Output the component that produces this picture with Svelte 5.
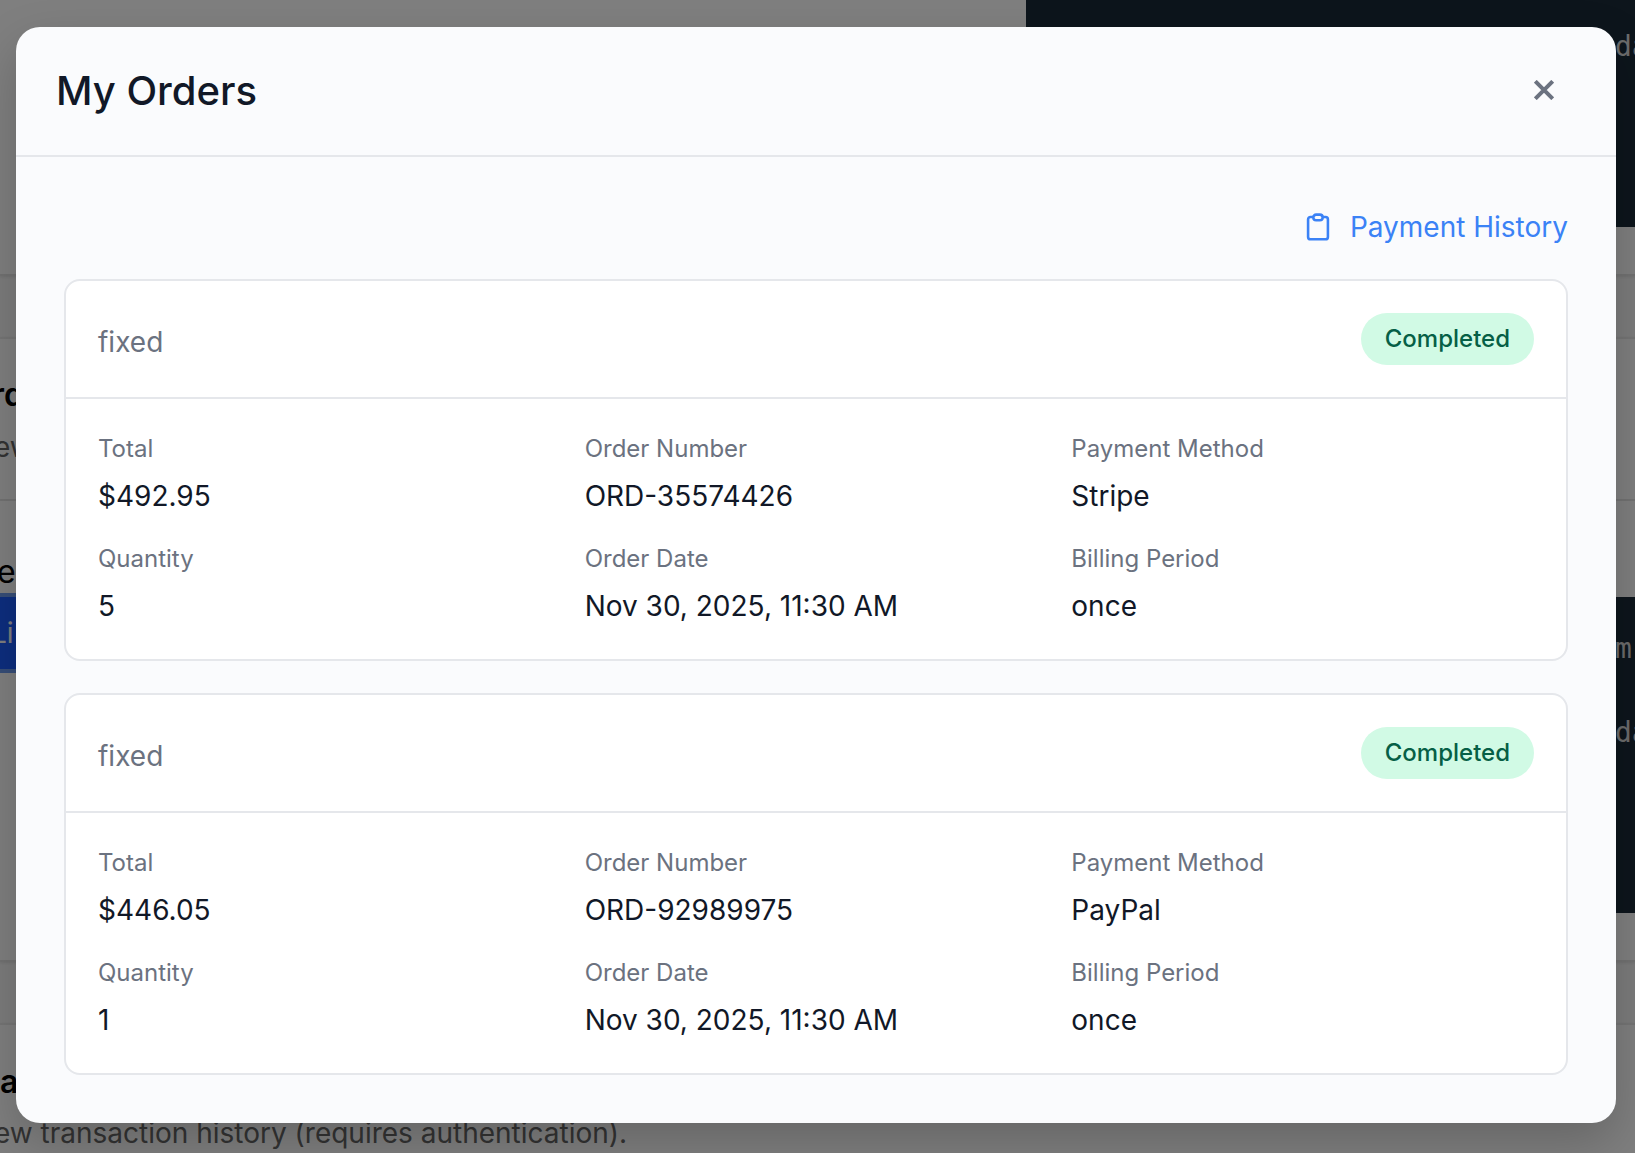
<script>
    const orders = [
        {
            type: 'fixed',
            status: 'Completed',
            fields: [
                ['Total', '$492.95'],
                ['Order Number', 'ORD-35574426'],
                ['Payment Method', 'Stripe'],
                ['Quantity', '5'],
                ['Order Date', 'Nov 30, 2025, 11:30 AM'],
                ['Billing Period', 'once']
            ]
        },
        {
            type: 'fixed',
            status: 'Completed',
            fields: [
                ['Total', '$446.05'],
                ['Order Number', 'ORD-92989975'],
                ['Payment Method', 'PayPal'],
                ['Quantity', '1'],
                ['Order Date', 'Nov 30, 2025, 11:30 AM'],
                ['Billing Period', 'once']
            ]
        }
    ];
</script>

<div class="screen">
    <div class="page">
        <section class="first">
            <div class="code code-top">da</div>
        </section>
        <section class="middle">
            <header>
                <h3>rd</h3>
                <p>ew</p>
            </header>
            <div class="demo">
                <div class="controls">
                    <span class="label">e</span>
                    <button class="primary">Li</button>
                </div>
                <div class="code">
                    <span>m</span>
                    <span>da</span>
                </div>
            </div>
        </section>
        <section class="last">
            <h3>a</h3>
            <p>ew transaction history (requires authentication).</p>
        </section>
    </div>

    <div class="overlay">
        <div class="modal" role="dialog" aria-label="My Orders">
            <div class="modal-header">
                <h2>My Orders</h2>
                <button class="close" aria-label="Close">
                    <svg width="20" height="20" viewBox="0 0 20 20" fill="none" stroke="currentColor" stroke-width="4">
                        <path d="M1.3 1.3 18.7 18.7M18.7 1.3 1.3 18.7" />
                    </svg>
                </button>
            </div>
            <div class="modal-body">
                <button class="history">
                    <svg width="28" height="28" viewBox="0 0 24 24" fill="none" stroke="currentColor" stroke-width="2.2">
                        <path d="M8.4 3.5H5.5a2 2 0 0 0-2 2v15a2 2 0 0 0 2 2h13a2 2 0 0 0 2-2v-15a2 2 0 0 0-2-2h-2.9" />
                        <rect x="8" y="1.4" width="8" height="4.8" rx="2.4" />
                    </svg>
                    Payment History
                </button>
                <div class="orders">
                    {#each orders as order}
                        <div class="card">
                            <div class="card-header">
                                <span class="type">{order.type}</span>
                                <span class="badge">{order.status}</span>
                            </div>
                            <dl>
                                {#each order.fields as [label, value]}
                                    <div class="field">
                                        <dt>{label}</dt>
                                        <dd>{value}</dd>
                                    </div>
                                {/each}
                            </dl>
                        </div>
                    {/each}
                </div>
            </div>
        </div>
    </div>
</div>

<style>
    :global(body) {
        overflow: hidden;
    }

    .screen {
        position: relative;
        height: 1153px;
        overflow: hidden;
        font-family: Inter, sans-serif;
        font-size: 28px;
        line-height: 1.5;
        color: #111827;
    }

    .screen * {
        box-sizing: border-box;
    }

    h2, h3, p, dl, dd {
        margin: 0;
    }

    button {
        border: none;
        padding: 0;
        background: none;
        font: inherit;
        letter-spacing: inherit;
    }

    .page {
        display: flex;
        flex-direction: column;
        gap: 61px;
        height: 1153px;
        background: #f9f9f9;
        color: #000;
    }

    .page section {
        flex-shrink: 0;
        background: #fff;
        box-shadow: 0 1px 3px rgba(0, 0, 0, 0.1);
    }

    .page h3 {
        font-size: 32px;
        font-weight: 600;
        line-height: 48px;
    }

    .page p {
        margin-left: -6px;
        color: #666;
    }

    .code {
        background: #1b2a38;
        color: #d8d8d8;
        font-family: "DejaVu Sans Mono", monospace;
        font-size: 28px;
    }

    .first {
        height: 276px;
        border-bottom: 2px solid #e5e5e5;
    }

    .code-top {
        height: 227px;
        margin-left: 1026px;
        padding: 26px 0 0 589px;
    }

    .middle {
        height: 625px;
        border-top: 2px solid #eaeaea;
        border-bottom: 2px solid #e5e5e5;
    }

    .middle header {
        height: 162px;
        padding-top: 32px;
        border-bottom: 2px solid #e5e5e5;
    }

    .middle h3 {
        margin-left: -8px;
    }

    .middle header p {
        margin-top: 7px;
    }

    .demo {
        display: grid;
        grid-template-columns: 1026px 1fr;
        padding-top: 49px;
    }

    .label {
        display: block;
        height: 43px;
        margin-left: -3px;
        font-size: 32px;
        line-height: 44px;
    }

    .primary {
        display: block;
        width: 120px;
        height: 80px;
        border: 4px solid #6f9df0;
        border-left: none;
        background: #1a5cff;
        color: #fff;
        text-align: left;
        text-indent: -9px;
    }

    .demo .code {
        height: 316px;
        margin-top: 47px;
        padding: 31px 0 0 589px;
    }

    .demo .code span {
        display: block;
        margin-bottom: 42px;
    }

    .last {
        height: 200px;
        padding-top: 33px;
        border-top: 2px solid #eaeaea;
    }

    .last p {
        margin-top: 6px;
    }

    .overlay {
        position: absolute;
        inset: 0;
        padding: 27px 19px 30px 16px;
        background: rgba(0, 0, 0, 0.5);
    }

    .modal {
        height: 1096px;
        border-radius: 24px;
        background: #fafbfd;
        box-shadow: 0 20px 50px rgba(0, 0, 0, 0.2);
    }

    .modal-header {
        display: flex;
        justify-content: space-between;
        align-items: center;
        height: 130px;
        padding: 0 40px;
        border-bottom: 2px solid #e5e7eb;
    }

    h2 {
        font-size: 40px;
        font-weight: 500;
        line-height: 48px;
    }

    .close {
        display: grid;
        place-items: center;
        width: 64px;
        height: 64px;
        margin-bottom: 2px;
        color: #6b7280;
    }

    .modal-body {
        display: flex;
        flex-direction: column;
        padding: 49px 48px 48px;
    }

    .history {
        display: flex;
        align-items: center;
        gap: 18px;
        height: 42px;
        align-self: flex-end;
        color: #3b82f6;
    }

    .orders {
        display: flex;
        flex-direction: column;
        gap: 32px;
        margin-top: 31px;
    }

    .card {
        border: 2px solid #e5e7eb;
        border-radius: 16px;
        background: #fff;
    }

    .card-header {
        display: flex;
        justify-content: space-between;
        align-items: flex-start;
        height: 118px;
        padding: 32px;
        border-bottom: 2px solid #e5e7eb;
    }

    .type {
        padding-top: 8px;
        color: #6b7280;
    }

    .badge {
        padding: 8px 24px;
        border-radius: 26px;
        background: #d1fae5;
        color: #065f46;
        font-size: 24px;
        font-weight: 500;
    }

    dl {
        display: grid;
        grid-template-columns: repeat(3, 1fr);
        gap: 24px;
        padding: 32px;
    }

    dt {
        margin-bottom: 8px;
        color: #6b7280;
        font-size: 24px;
    }
</style>
